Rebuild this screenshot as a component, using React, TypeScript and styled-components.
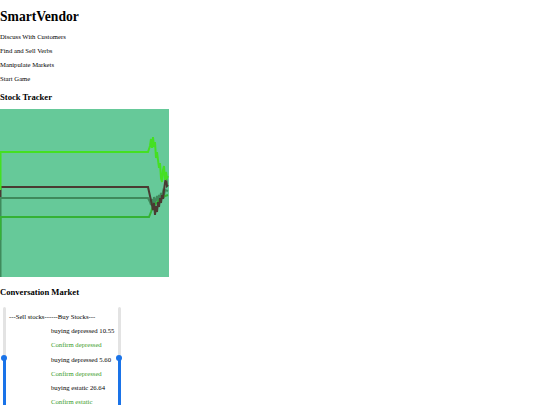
import React, { FC } from "react";
import styled, { createGlobalStyle } from "styled-components";

const GlobalStyle = createGlobalStyle`
  html, body {
    margin: 0;
    padding: 0;
    background: #ffffff;
  }
  body {
    font-family: "Liberation Serif", "Times New Roman", serif;
    color: #000000;
  }
`;

const Page = styled.div`
  width: 540px;
  height: 405px;
  overflow: hidden;
  display: flex;
  flex-direction: column;
  align-items: flex-start;
`;

const Title = styled.h1`
  margin: 8px 0 0 0;
  font-size: 13.6px;
  line-height: 17px;
  font-weight: bold;
`;

const Menu = styled.div`
  margin-top: 8px;
  display: flex;
  flex-direction: column;
  gap: 6px;
`;

const MenuItem = styled.div`
  font-size: 6.7px;
  line-height: 8px;
`;

const SectionTitle = styled.h3<{ $top: number }>`
  margin: ${p => p.$top}px 0 0 0;
  font-size: 8.6px;
  line-height: 10px;
  font-weight: bold;
`;

const ChartBox = styled.div`
  margin-top: 7px;
  width: 169px;
  height: 168px;
  background: #66c999;
`;

const MarketRow = styled.div`
  margin-top: 9px;
  display: flex;
  align-items: flex-start;
  gap: 1px;
`;

const SliderWrap = styled.div`
  position: relative;
  width: 8px;
  height: 110px;
  margin-top: 1px;
`;

const Track = styled.div`
  position: absolute;
  left: 2.5px;
  top: 0;
  bottom: 0;
  width: 3px;
  border-radius: 2px;
  background: #e3e3e3;
`;

const Fill = styled.div`
  position: absolute;
  left: 2.5px;
  bottom: 0;
  width: 3px;
  background: #1a73e8;
`;

const Thumb = styled.div`
  position: absolute;
  left: 1px;
  width: 6px;
  height: 6px;
  border-radius: 50%;
  background: #1a73e8;
`;

const MarketColumn = styled.div`
  width: 105px;
  display: flex;
  flex-direction: column;
  font-size: 6.7px;
  white-space: nowrap;
`;

const MarketHeader = styled.div`
  line-height: 14px;
  margin-top: 4px;
`;

const Offer = styled.div<{ $confirm?: boolean }>`
  padding-left: 42px;
  line-height: 14.3px;
  color: ${p => (p.$confirm ? "#3c9c2a" : "#000000")};
`;

type SliderProps = { thumbTop: number };

const VSlider: FC<SliderProps> = ({ thumbTop }) => (
  <SliderWrap>
    <Track />
    <Fill style={{ top: thumbTop + 3 }} />
    <Thumb style={{ top: thumbTop }} />
  </SliderWrap>
);

const jitterA = "148,152 150,146 151,139 152,148 153,137 154,147 155,142 156,158 157,152 159,168 160,163 161,178 162,182 163,170 164,166 165,180 166,172 167,178 168,176";
const jitterB = "148,187 150,196 152,205 153,210 154,203 155,215 156,206 157,212 158,202 159,207 160,198 161,203 162,195 163,199 164,190 165,183 166,177 167,186 168,185";
const jitterC = "148,198 150,202 151,205 152,199 153,207 154,197 155,203 156,200 157,196 158,202 159,195 160,199 161,193 162,197 163,192 164,195 165,190 168,191";
const jitterD = "149,217 151,212 153,206 154,208 155,204 157,203 159,200 161,199 163,197 165,196 168,195";

const StockChart: FC = () => (
  <ChartBox>
    <svg width="169" height="168" viewBox="0 109 169 168">
      <polyline points={`0.5,277 0.5,198 148,198 ${jitterC}`} fill="none" stroke="#3f8a5c" strokeWidth="2" />
      <polyline points={`0.5,240 0.5,217 149,217 ${jitterD}`} fill="none" stroke="#34b234" strokeWidth="2" />
      <polyline points={`0.5,197 0.5,187 148,187 ${jitterB}`} fill="none" stroke="#4a3a32" strokeWidth="2" />
      <polyline points={`0.5,190 0.5,152 148,152 ${jitterA}`} fill="none" stroke="#44e022" strokeWidth="2" />
    </svg>
  </ChartBox>
);

const offers: { text: string; confirm?: boolean }[] = [
  { text: "buying depressed 10.55" },
  { text: "Confirm depressed", confirm: true },
  { text: "buying depressed 5.60" },
  { text: "Confirm depressed", confirm: true },
  { text: "buying estatic 26.64" },
  { text: "Confirm estatic", confirm: true },
];

const App: FC = () => (
  <>
    <GlobalStyle />
    <Page>
      <Title>SmartVendor</Title>
      <Menu>
        <MenuItem>Discuss With Customers</MenuItem>
        <MenuItem>Find and Sell Verbs</MenuItem>
        <MenuItem>Manipulate Markets</MenuItem>
        <MenuItem>Start Game</MenuItem>
      </Menu>
      <SectionTitle $top={9}>Stock Tracker</SectionTitle>
      <StockChart />
      <SectionTitle $top={10}>Conversation Market</SectionTitle>
      <MarketRow>
        <VSlider thumbTop={48} />
        <MarketColumn>
          <MarketHeader>---Sell stocks------Buy Stocks---</MarketHeader>
          {offers.map((o, i) => (
            <Offer key={i} $confirm={o.confirm}>
              {o.text}
            </Offer>
          ))}
        </MarketColumn>
        <VSlider thumbTop={48} />
      </MarketRow>
    </Page>
  </>
);

export default App;
